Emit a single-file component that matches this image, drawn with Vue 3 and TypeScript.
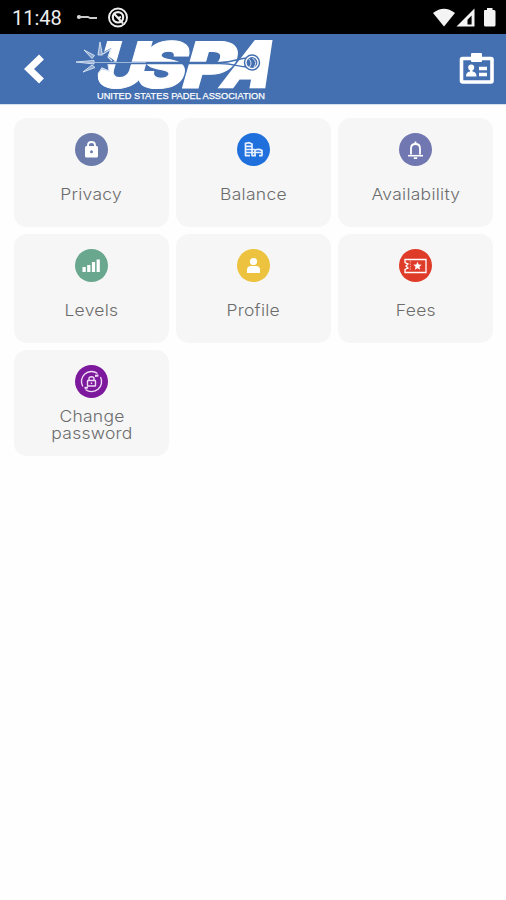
<script setup lang="ts">
interface Tile {
  id: string
  label: string
  color: string
}

const tiles: Tile[] = [
  { id: 'privacy', label: 'Privacy', color: '#6b7cac' },
  { id: 'balance', label: 'Balance', color: '#1f70dc' },
  { id: 'availability', label: 'Availability', color: '#7177b0' },
  { id: 'levels', label: 'Levels', color: '#6aa78f' },
  { id: 'profile', label: 'Profile', color: '#ecc23e' },
  { id: 'fees', label: 'Fees', color: '#df3b29' },
  { id: 'password', label: 'Change password', color: '#7d199c' },
]
</script>

<template>
  <div class="screen">
    <div class="status">
      <span class="time">11:48</span>
      <svg class="key" width="24" height="10" viewBox="0 0 24 10">
        <circle cx="3" cy="4" r="2.100" fill="#ddd" />
        <path d="M3 4H12L14 5H21" fill="none" stroke="#ccc" stroke-width="1.800" />
      </svg>
      <svg class="ring" width="22" height="22" viewBox="0 0 22 22" fill="none" stroke="#eee">
        <circle cx="11" cy="10.500" r="9" stroke-width="1.900" />
        <circle cx="11" cy="10.300" r="5.200" stroke-width="2.200" />
        <path d="M6.500 6L16 16.500M11 11L14 10" stroke-width="2" />
      </svg>
      <svg class="signals" width="64" height="20" viewBox="0 0 64 20" fill="#f4f4f4">
        <path d="M0 5Q11-3.500 22 5L11 18.500Z" />
        <path fill-rule="evenodd" d="M41.500 .5V18.500H23.500ZM38.600 7.500L34.500 11.800V16.400H38.600Z" />
        <path d="M51.500 2H54V0H59.500V2H61Q62.500 2 62.500 3.500V17Q62.500 18.500 61 18.500H52.500Q51 18.500 51 17V3.500Q51 2 51.500 2Z" />
      </svg>
    </div>

    <header class="bar">
      <svg class="back" width="22" height="32" viewBox="0 0 22 32">
        <path d="M17.500 4L5 16L17.500 28" fill="none" stroke="#fff" stroke-width="7" />
      </svg>
      <svg class="logo" width="202" height="70" viewBox="0 0 202 70">
        <g transform="translate(0 53.500) skewX(-16)" class="word">
          <text x="17" y="0" textLength="51" lengthAdjust="spacingAndGlyphs">U</text>
          <text x="59" y="0" textLength="49" lengthAdjust="spacingAndGlyphs">S</text>
          <text x="105" y="0" textLength="51" lengthAdjust="spacingAndGlyphs">P</text>
        </g>
        <text class="word heavy" transform="translate(144.500 53) skewX(-25)" textLength="47" lengthAdjust="spacingAndGlyphs">A</text>
        <path d="M30 28.500H146C160 28.500 165 24 173 24M30 29.500H146C160 29.500 165 33 173 33" fill="none" stroke="#4470b1" stroke-width="1.500" />
        <path d="M28 19L37 14L34 22L41 27L34 30L35 37L28 35L23 40L22 34L20 27Z" fill="#4470b1" />
        <path d="M29 20L37 15L34 23L38 27M34 30L35 37L28 34L24 40" fill="none" stroke="#dce6f3" stroke-width="1.100" />
        <path d="M26 8L28.500 21L24 21ZM10 16L20.500 21.500L18 24.500ZM2 28L20 26.500V30ZM9 38L18 31L21 33.500Z" fill="#8fabd2" stroke="#dce6f3" stroke-width=".9" />
        <path d="M10 28.500H72" stroke="#a9bfdd" stroke-width=".9" />
        <circle cx="178" cy="28.500" r="7.500" fill="#fff" stroke="#4470b1" stroke-width="1.500" />
        <circle cx="178" cy="28.500" r="5.400" fill="#4470b1" />
        <path d="M174.500 24.500Q179 28.500 175.500 33M178.500 24Q184 28.500 180 33" fill="none" stroke="#dce6f3" />
        <text class="caption" x="23" y="64.500" textLength="168" lengthAdjust="spacingAndGlyphs">UNITED STATES PADEL ASSOCIATION</text>
      </svg>
      <svg class="badge" width="36" height="34" viewBox="0 0 36 34">
        <rect x="2.500" y="6.500" width="30.500" height="23.500" rx="1" fill="none" stroke="#fff" stroke-width="3.600" />
        <rect x="12" y="1" width="11" height="9" rx="1" fill="#fff" />
        <circle cx="12.200" cy="15.500" r="3" fill="#fff" />
        <path d="M11 17H13.500V19.500Q17.500 20 17.500 24.500H7Q7 20 11 19.500Z" fill="#fff" />
        <path d="M20 16.500H28M20 22.500H28" stroke="#fff" stroke-width="3.300" />
      </svg>
    </header>

    <main class="grid">
      <div v-for="t in tiles" :key="t.id" class="card" :class="t.id">
        <svg class="icon" width="33" height="33" viewBox="0 0 33 33">
          <circle cx="16.500" cy="16.500" r="16.500" :fill="t.color" />
          <g v-if="t.id === 'privacy'">
            <rect x="10" y="13" width="13" height="11.500" rx="1.500" fill="#fff" />
            <path d="M13 14V12Q13 9 16.500 9T20 12V14" fill="none" stroke="#fff" stroke-width="1.800" />
            <circle cx="16.500" cy="18.700" r="1.500" :fill="t.color" />
          </g>
          <g v-else-if="t.id === 'balance'" fill="none" stroke="#e6f0ff" stroke-width="1.700">
            <path d="M8.500 23V10.500L12 9.700L15 11V22.500M8.500 13.300H15M8.500 16.500H18M8.500 19.500H25M8 22.700H13M14.500 22.700H19M22 22.700H25.500M18 22V17Q21.500 15.500 25 17.500V22.500" />
          </g>
          <g v-else-if="t.id === 'availability'" fill="none" stroke="#fff">
            <path d="M12 21.500V15.500Q12 11 16.500 11T21 15.500V21.500" stroke-width="1.800" />
            <path d="M9 22.700H24" stroke-width="1.600" />
            <path d="M16.500 8.500V11M14.800 25.200H18.200" stroke-width="1.800" />
          </g>
          <g v-else-if="t.id === 'levels'" fill="#fff">
            <rect x="7.500" y="18" width="3.200" height="5" />
            <rect x="12.200" y="16" width="3.200" height="7" />
            <rect x="16.900" y="13" width="3.200" height="10" />
            <rect x="21.600" y="10.500" width="3.200" height="12.500" />
          </g>
          <g v-else-if="t.id === 'profile'" fill="#fff">
            <circle cx="16.500" cy="12.500" r="3.600" />
            <path d="M10 24V21Q10 17 14 17H19Q23 17 23 21V24Z" />
          </g>
          <g v-else-if="t.id === 'fees'">
            <path d="M6 10.500H27V23.500H6V20.500L9 19L7 17L9 15L6 13.500Z" fill="none" stroke="#fff" stroke-width="1.300" />
            <path d="M11.300 12V22" stroke="#f3a79e" stroke-width="1" stroke-dasharray="1.500 1" />
            <path d="M18.500 12.700L19.700 15.600L22.700 15.800L20.400 17.800L21.200 20.800L18.500 19.200L15.800 20.800L16.600 17.800L14.300 15.800L17.300 15.600Z" fill="#fff" />
          </g>
          <g v-else fill="none" stroke="#f0dcf5" stroke-width="1.400">
            <path d="M7.800 21.500A10 10 0 0 1 22.500 8.500M25.500 12A10 10 0 0 1 10.500 24.500" />
            <path d="M20 10.800L23.500 10.500M13 22.500L9.500 23" stroke-width="2.200" />
            <rect x="12.500" y="15.500" width="8" height="5.500" rx=".5" />
            <path d="M14 15V13.500Q14 11.700 16.500 11.700T19 13.500V15M16.500 17.500V19" />
          </g>
        </svg>
        <span class="label">{{ t.label }}</span>
      </div>
    </main>
  </div>
</template>

<style>
body {
  margin: 0;
  background: #fefefe;
}
</style>

<style scoped>
.screen {
  width: 506px;
  height: 900px;
  background: #fefefe;
  overflow: hidden;
}
.status {
  height: 34px;
  box-sizing: border-box;
  padding: 1px 9px 0 12px;
  display: flex;
  align-items: center;
  background: #000;
}
.time {
  width: 64px;
  font: 400 20px/34px Roboto, sans-serif;
  color: #eee;
}
.ring {
  margin-left: 7px;
}
.signals {
  margin-left: auto;
}
.bar {
  height: 71px;
  display: flex;
  align-items: center;
  padding: 0 11px 0 24px;
  background: #4470b1;
  border-bottom: 1px solid #d5e0ef;
  box-sizing: border-box;
}
.logo {
  margin-left: 28px;
  overflow: visible;
}
.word {
  font-family: Inter, sans-serif;
  font-weight: 900;
  font-size: 64px;
  fill: #fff;
  stroke: #fff;
  stroke-width: 1px;
}
.heavy {
  stroke-width: 2.5px;
  font-size: 63px;
}
.caption {
  font-family: "Liberation Sans", Arial, sans-serif;
  font-size: 9.8px;
  fill: #fff;
  stroke: #fff;
  stroke-width: 0.25px;
}
.badge {
  margin-left: auto;
}
.grid {
  display: grid;
  grid-template-columns: repeat(3, 155px);
  grid-template-rows: 109px 109px 106px;
  gap: 7px;
  padding: 13.4px 14px;
}
.card {
  display: flex;
  flex-direction: column;
  align-items: center;
  box-sizing: border-box;
  padding-top: 14.5px;
  border-radius: 13px;
  background: #f6f6f6;
}
.label {
  margin-top: 20.4px;
  font: 300 16.5px/17px Inter, "Open Sans", sans-serif;
  letter-spacing: 0.25px;
  color: #6c6c6c;
  text-align: center;
  transform: scaleX(1.06);
}
.password .label {
  width: 90px;
  margin-top: 10.4px;
}
</style>
